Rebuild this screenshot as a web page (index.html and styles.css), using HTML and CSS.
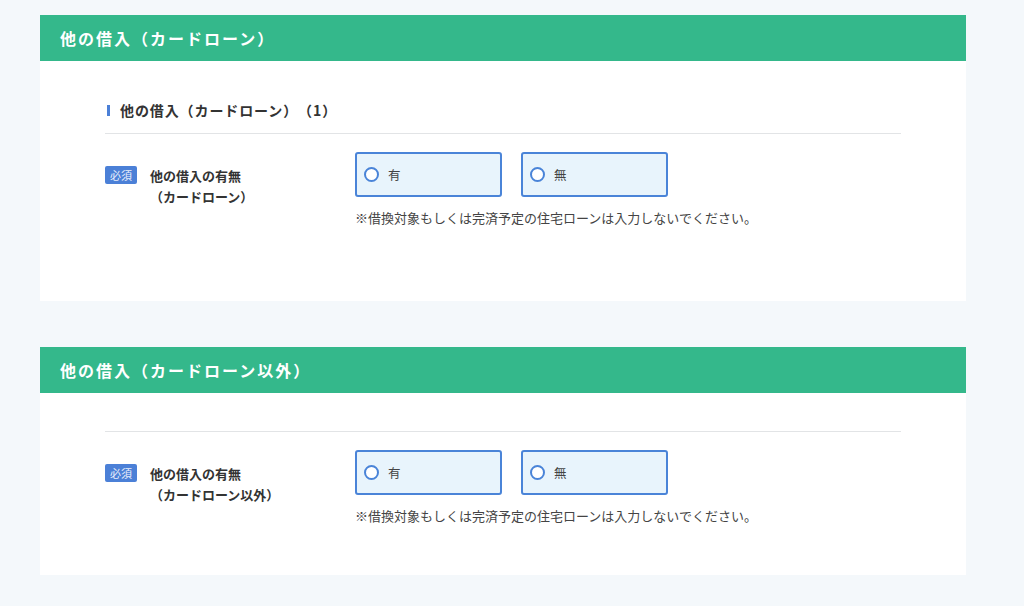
FILE: index.html
```html
<!DOCTYPE html>
<html lang="ja">
<head>
    <meta charset="UTF-8">
    <meta name="viewport" content="width=device-width, initial-scale=1.0">
    <title>他の借入</title>
    <link rel="stylesheet" href="styles.css">
</head>
<body>
    <div class="page">
        <section class="form-card">
            <h2 class="card-title">他の借入（カードローン）</h2>
            <div class="card-body card-body--first">
                <h3 class="sub-title">他の借入（カードローン）（1）</h3>
                <div class="form-row">
                    <div class="row-label">
                        <span class="required">必須</span>
                        <p class="label-text">他の借入の有無<br>（カードローン）</p>
                    </div>
                    <div class="row-field">
                        <div class="radio-group">
                            <label class="radio-box"><span class="radio-mark"></span>有</label>
                            <label class="radio-box"><span class="radio-mark"></span>無</label>
                        </div>
                        <p class="note">※借換対象もしくは完済予定の住宅ローンは入力しないでください。</p>
                    </div>
                </div>
            </div>
        </section>

        <section class="form-card">
            <h2 class="card-title">他の借入（カードローン以外）</h2>
            <div class="card-body">
                <div class="divider"></div>
                <div class="form-row">
                    <div class="row-label">
                        <span class="required">必須</span>
                        <p class="label-text">他の借入の有無<br>（カードローン以外）</p>
                    </div>
                    <div class="row-field">
                        <div class="radio-group">
                            <label class="radio-box"><span class="radio-mark"></span>有</label>
                            <label class="radio-box"><span class="radio-mark"></span>無</label>
                        </div>
                        <p class="note">※借換対象もしくは完済予定の住宅ローンは入力しないでください。</p>
                    </div>
                </div>
            </div>
        </section>
    </div>
</body>
</html>
```

FILE: styles.css
```css
* {
    margin: 0;
    padding: 0;
    box-sizing: border-box;
}

body {
    font-family: "Noto Sans CJK JP", "Noto Sans", sans-serif;
    background: #f4f8fb;
    color: #333;
    text-spacing-trim: space-all;
}

.page {
    padding: 15px 58px 0 40px;
    display: flex;
    flex-direction: column;
    gap: 46px;
}

.form-card {
    background: #ffffff;
}

.card-title {
    background: #34b88b;
    color: #ffffff;
    font-size: 16px;
    font-weight: bold;
    letter-spacing: 2px;
    height: 46px;
    line-height: 46px;
    padding-left: 20px;
}

.card-body {
    padding: 38px 65px 50px;
}

.card-body--first {
    padding-bottom: 74px;
}

.sub-title {
    font-size: 14px;
    font-weight: bold;
    letter-spacing: 0.9px;
    line-height: 22px;
    padding: 0 0 12px 15px;
    border-bottom: 1px solid #e2e4e6;
    position: relative;
}

.sub-title::before {
    content: "";
    position: absolute;
    left: 2px;
    top: 6px;
    width: 3px;
    height: 11px;
    background: #4b80d7;
}

.divider {
    border-top: 1px solid #e2e4e6;
}

.form-row {
    display: flex;
    margin-top: 18px;
}

.row-label {
    width: 250px;
    display: flex;
    align-items: flex-start;
    gap: 13px;
    padding-top: 14px;
}

.required {
    background: #4b80d7;
    color: #e8eefb;
    font-size: 11px;
    width: 32px;
    height: 18px;
    line-height: 18px;
    text-align: center;
    border-radius: 2px;
}

.label-text {
    font-size: 13px;
    font-weight: bold;
    line-height: 21px;
    margin-top: -1px;
}

.radio-group {
    display: flex;
    gap: 19px;
}

.radio-box {
    width: 147px;
    height: 45px;
    background: #e8f4fc;
    border: 2px solid #4a84d8;
    border-radius: 3px;
    display: flex;
    align-items: center;
    padding-left: 7px;
    gap: 9px;
    font-size: 12.5px;
    color: #444;
}

.radio-mark {
    width: 15px;
    height: 15px;
    border: 2px solid #4a84d8;
    border-radius: 50%;
    background: #ffffff;
}

.note {
    margin-top: 12px;
    font-size: 13px;
    line-height: 18px;
    color: #444;
}
```
